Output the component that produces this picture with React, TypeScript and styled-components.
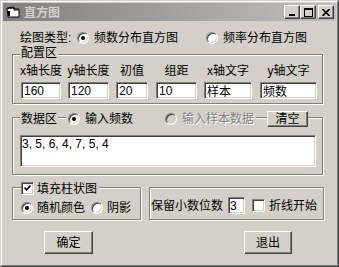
import React from "react";
import styled, { createGlobalStyle } from "styled-components";

const GlobalStyle = createGlobalStyle`
  html, body {
    margin: 0;
    padding: 0;
    background: #d4d0c8;
  }
  body {
    font-family: "Liberation Sans", "Noto Sans CJK SC", sans-serif;
    font-size: 12px;
    color: #000;
  }
`;

const Window = styled.div`
  width: 339px;
  height: 267px;
  box-sizing: border-box;
  border: 1px solid;
  border-color: #d4d0c8 #404040 #404040 #d4d0c8;
  background: #d4d0c8;
`;

const Frame = styled.div`
  height: 100%;
  box-sizing: border-box;
  border: 1px solid;
  border-color: #fff #808080 #808080 #fff;
  padding: 1px;
  display: flex;
  flex-direction: column;
`;

const TitleBar = styled.div`
  height: 18px;
  flex: none;
  display: flex;
  align-items: center;
  background: linear-gradient(to right, #808080, #c0c0c0);
  padding-right: 2px;
`;

const TitleIcon = styled.svg`
  width: 16px;
  height: 16px;
  margin-left: 2px;
  flex: none;
`;

const TitleText = styled.span`
  margin-left: 3px;
  font-weight: 700;
  font-size: 12px;
  line-height: 18px;
  color: #d4d0c8;
  font-family: "Noto Sans CJK SC", sans-serif;
`;

const CaptionButtons = styled.div`
  margin-left: auto;
  display: flex;
`;

const CaptionButton = styled.div<{ $gap?: boolean }>`
  width: 16px;
  height: 14px;
  box-sizing: border-box;
  margin-left: ${(p) => (p.$gap ? "2px" : "0")};
  background: #d4d0c8;
  border: 1px solid;
  border-color: #fff #404040 #404040 #fff;
  box-shadow: inset -1px -1px #808080;
  display: flex;
  align-items: center;
  justify-content: center;
`;

const Body = styled.div`
  flex: 1;
  display: flex;
  flex-direction: column;
  padding-left: 9px;
`;

const TypeRow = styled.div`
  margin-top: 9px;
  height: 16px;
  display: flex;
  align-items: center;
  padding-left: 8px;
`;

const RowLabel = styled.span<{ $w?: number }>`
  width: ${(p) => (p.$w ? `${p.$w}px` : "auto")};
  flex: none;
  line-height: 14px;
  white-space: nowrap;
`;

const Option = styled.div<{ $w?: number; $disabled?: boolean }>`
  width: ${(p) => (p.$w ? `${p.$w}px` : "auto")};
  box-sizing: border-box;
  flex: none;
  display: flex;
  align-items: center;
  gap: 5px;
  background: #d4d0c8;
  line-height: 14px;
  white-space: nowrap;
  color: ${(p) => (p.$disabled ? "#808080" : "#000")};
  text-shadow: ${(p) => (p.$disabled ? "1px 1px #fff" : "none")};
`;

const RadioDot = styled.span<{ $checked?: boolean; $disabled?: boolean }>`
  width: 12px;
  height: 12px;
  box-sizing: border-box;
  flex: none;
  border-radius: 50%;
  border: 1px solid;
  border-color: #808080 #fff #fff #808080;
  box-shadow: inset 1px 1px #404040, inset -1px -1px #d4d0c8;
  background: ${(p) => (p.$disabled ? "#d4d0c8" : "#fff")};
  display: flex;
  align-items: center;
  justify-content: center;
  &::after {
    content: "";
    width: 4px;
    height: 4px;
    border-radius: 50%;
    background: #000;
    display: ${(p) => (p.$checked ? "block" : "none")};
  }
`;

const CheckBox = styled.span`
  width: 13px;
  height: 13px;
  box-sizing: border-box;
  flex: none;
  border: 1px solid;
  border-color: #808080 #fff #fff #808080;
  box-shadow: inset 1px 1px #404040, inset -1px -1px #d4d0c8;
  background: #fff;
  display: flex;
  align-items: center;
  justify-content: center;
`;

const GroupBox = styled.div<{ $w: number; $h: number; $mt: number }>`
  width: ${(p) => p.$w}px;
  height: ${(p) => p.$h}px;
  margin-top: ${(p) => p.$mt}px;
  box-sizing: border-box;
  flex: none;
  border: 1px solid #808080;
  box-shadow: inset 1px 1px #fff, 1px 1px #fff;
  display: flex;
  flex-direction: column;
`;

const Legend = styled.div<{ $mt: number; $h: number; $ml: number }>`
  margin-top: ${(p) => p.$mt}px;
  margin-left: ${(p) => p.$ml}px;
  height: ${(p) => p.$h}px;
  display: flex;
  align-items: center;
  align-self: flex-start;
`;

const LegendText = styled.span`
  background: #d4d0c8;
  padding: 0 1px;
  line-height: 14px;
  white-space: nowrap;
`;

const FieldsRow = styled.div<{ $mt: number }>`
  margin-top: ${(p) => p.$mt}px;
  margin-left: 8px;
  display: flex;
`;

const Field = styled.div<{ $w: number; $ml: number }>`
  width: ${(p) => p.$w}px;
  margin-left: ${(p) => p.$ml}px;
  display: flex;
  flex-direction: column;
  align-items: center;
  gap: 4px;
`;

const FieldLabel = styled.span`
  line-height: 14px;
  height: 14px;
  white-space: nowrap;
`;

const TextBox = styled.input<{ $w?: number }>`
  width: ${(p) => (p.$w ? `${p.$w}px` : "100%")};
  height: 17px;
  box-sizing: border-box;
  margin: 0;
  padding: 0 0 0 2px;
  border: 1px solid;
  border-color: #808080 #fff #fff #808080;
  box-shadow: inset 1px 1px #404040, inset -1px -1px #d4d0c8;
  background: #fff;
  font: inherit;
  font-size: 12px;
  color: #000;
  outline: none;
`;

const HeaderGap = styled.span<{ $w: number }>`
  width: ${(p) => p.$w}px;
  flex: none;
`;

const PushButton = styled.button<{ $w: number; $h: number }>`
  width: ${(p) => p.$w}px;
  height: ${(p) => p.$h}px;
  box-sizing: border-box;
  flex: none;
  margin: 0;
  padding: 0;
  background: #d4d0c8;
  border: 1px solid;
  border-color: #fff #404040 #404040 #fff;
  box-shadow: inset -1px -1px #808080;
  font: inherit;
  font-size: 12px;
  color: #000;
  line-height: 14px;
`;

const DataArea = styled.textarea`
  margin: 8px 0 0 7px;
  width: 296px;
  height: 32px;
  box-sizing: border-box;
  padding: 1px 1px;
  border: 1px solid;
  border-color: #808080 #fff #fff #808080;
  box-shadow: inset 1px 1px #404040, inset -1px -1px #d4d0c8;
  background: #fff;
  font: inherit;
  font-size: 12px;
  line-height: 14px;
  color: #000;
  resize: none;
  overflow: hidden;
  outline: none;
`;

const BottomRow = styled.div`
  display: flex;
  gap: 8px;
`;

const OptionsRow = styled.div`
  margin-top: 6px;
  margin-left: 8px;
  height: 12px;
  display: flex;
  align-items: center;
`;

const DigitsRow = styled.div`
  margin-top: 9px;
  height: 17px;
  padding-left: 1px;
  display: flex;
  align-items: center;
`;

const ButtonRow = styled.div`
  margin-top: 11px;
  padding-left: 32px;
  display: flex;
  gap: 151px;
`;

export default function App() {
  return (
    <>
      <GlobalStyle />
      <Window>
        <Frame>
          <TitleBar>
            <TitleIcon viewBox="0 0 16 16">
              <path d="M2 4 L9 3 L9 5 L14 5 L14 13 L3 13 Z" fill="#fff" stroke="#000" strokeWidth="1" />
              <path d="M2.5 4.5 L9 4 L9 6 L13.5 6" fill="none" stroke="#000" strokeWidth="1" />
              <rect x="3" y="7" width="2" height="5" fill="#000" />
            </TitleIcon>
            <TitleText>直方图</TitleText>
            <CaptionButtons>
              <CaptionButton>
                <svg width="8" height="7" viewBox="0 0 8 7">
                  <rect x="1" y="5" width="6" height="2" fill="#000" />
                </svg>
              </CaptionButton>
              <CaptionButton>
                <svg width="9" height="9" viewBox="0 0 9 9">
                  <rect x="0.5" y="0.5" width="8" height="8" fill="none" stroke="#000" />
                  <rect x="0" y="0" width="9" height="2" fill="#000" />
                </svg>
              </CaptionButton>
              <CaptionButton $gap>
                <svg width="8" height="7" viewBox="0 0 8 7">
                  <path d="M0.5 0 L7.5 7 M7.5 0 L0.5 7" stroke="#000" strokeWidth="1.6" />
                </svg>
              </CaptionButton>
            </CaptionButtons>
          </TitleBar>
          <Body>
            <TypeRow>
              <RowLabel $w={57}>绘图类型:</RowLabel>
              <Option $w={129}>
                <RadioDot $checked />
                频数分布直方图
              </Option>
              <Option>
                <RadioDot />
                频率分布直方图
              </Option>
            </TypeRow>

            <GroupBox $w={311} $h={50} $mt={8}>
              <Legend $mt={-9} $h={14} $ml={7}>
                <LegendText>配置区</LegendText>
              </Legend>
              <FieldsRow $mt={4}>
                <Field $w={40} $ml={0}>
                  <FieldLabel>x轴长度</FieldLabel>
                  <TextBox defaultValue="160" />
                </Field>
                <Field $w={41} $ml={7}>
                  <FieldLabel>y轴长度</FieldLabel>
                  <TextBox defaultValue="120" />
                </Field>
                <Field $w={32} $ml={7}>
                  <FieldLabel>初值</FieldLabel>
                  <TextBox defaultValue="20" />
                </Field>
                <Field $w={41} $ml={8}>
                  <FieldLabel>组距</FieldLabel>
                  <TextBox defaultValue="10" />
                </Field>
                <Field $w={48} $ml={7}>
                  <FieldLabel>x轴文字</FieldLabel>
                  <TextBox defaultValue="样本" />
                </Field>
                <Field $w={57} $ml={8}>
                  <FieldLabel>y轴文字</FieldLabel>
                  <TextBox defaultValue="频数" />
                </Field>
              </FieldsRow>
            </GroupBox>

            <GroupBox $w={311} $h={58} $mt={13}>
              <Legend $mt={-8} $h={17} $ml={7}>
                <LegendText>数据区</LegendText>
                <HeaderGap $w={8} />
                <Option $w={97} style={{ paddingLeft: 2 }}>
                  <RadioDot $checked />
                  输入频数
                </Option>
                <Option $w={93} $disabled style={{ paddingLeft: 2 }}>
                  <RadioDot $disabled />
                  输入样本数据
                </Option>
                <HeaderGap $w={11} />
                <PushButton $w={41} $h={16}>清空</PushButton>
              </Legend>
              <DataArea defaultValue="3, 5, 6, 4, 7, 5, 4" />
            </GroupBox>

            <BottomRow>
              <GroupBox $w={129} $h={33} $mt={12}>
                <Legend $mt={-7} $h={15} $ml={8}>
                  <Option style={{ gap: 3, paddingRight: 2 }}>
                    <CheckBox>
                      <svg width="7" height="7" viewBox="0 0 7 7">
                        <path d="M0.5 2.5 L2.5 4.8 L6.5 0.5" fill="none" stroke="#000" strokeWidth="1.6" />
                      </svg>
                    </CheckBox>
                    填充柱状图
                  </Option>
                </Legend>
                <OptionsRow>
                  <Option $w={70} style={{ gap: 4 }}>
                    <RadioDot $checked />
                    随机颜色
                  </Option>
                  <Option style={{ gap: 4 }}>
                    <RadioDot />
                    阴影
                  </Option>
                </OptionsRow>
              </GroupBox>
              <GroupBox $w={175} $h={33} $mt={12}>
                <DigitsRow>
                  <RowLabel>保留小数位数</RowLabel>
                  <TextBox $w={17} defaultValue="3" style={{ marginLeft: 5, paddingLeft: 1 }} />
                  <Option style={{ marginLeft: 7, gap: 4 }}>
                    <CheckBox />
                    折线开始
                  </Option>
                </DigitsRow>
              </GroupBox>
            </BottomRow>

            <ButtonRow>
              <PushButton $w={49} $h={23}>确定</PushButton>
              <PushButton $w={48} $h={23}>退出</PushButton>
            </ButtonRow>
          </Body>
        </Frame>
      </Window>
    </>
  );
}
